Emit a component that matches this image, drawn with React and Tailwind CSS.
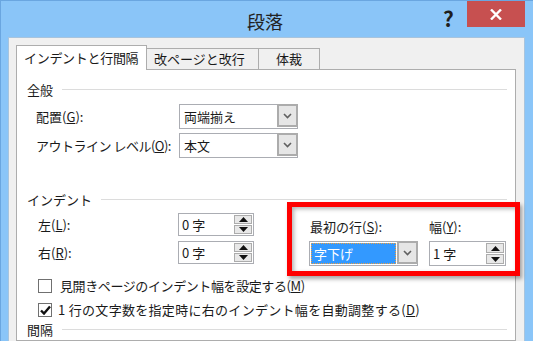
import React from 'react';

const font = { fontFamily: '"Noto Sans CJK JP", "Noto Sans", sans-serif' };

const Chevron = () => (
  <svg width="9" height="6" viewBox="0 0 9 6">
    <polyline points="1,1 4.5,4.5 8,1" fill="none" stroke="#606060" strokeWidth="1.6" />
  </svg>
);

const DropButton = () => (
  <div className="w-[21px] h-full flex items-center justify-center bg-[#e6e6e6] border-2 border-[#acacac] -my-px -mr-px">
    <Chevron />
  </div>
);

const Combo = ({ value, width, focused }) => (
  <div className={`${width} h-[25px] flex bg-white border border-[#abadb3]`}>
    <div className="flex-1 flex items-center pl-[1px] pr-[1px]">
      {focused ? (
        <span className="flex-1 h-[21px] flex items-center bg-[#3399ff] text-white border border-dotted border-[#f0a040] pl-[2px] leading-none">
          {value}
        </span>
      ) : (
        <span className="pl-[3px] leading-none">{value}</span>
      )}
    </div>
    <DropButton />
  </div>
);

const Arrow = ({ up }) => (
  <svg width="9" height="5" viewBox="0 0 9 5">
    <polygon points={up ? '0,5 9,5 4.5,0' : '0,0 9,0 4.5,5'} fill="#111" />
  </svg>
);

const Spin = ({ value, width, height }) => (
  <div className={`${width} ${height} flex bg-white border border-[#abadb3]`}>
    <span className="flex-1 flex items-center pl-[3px] leading-none">{value}</span>
    <div className="w-[19px] flex flex-col py-[1px] pr-[1px] gap-px">
      <div className="flex-1 flex items-center justify-center bg-[#e8e8e8] border border-[#acacac]">
        <Arrow up />
      </div>
      <div className="flex-1 flex items-center justify-center bg-[#e8e8e8] border border-[#acacac]">
        <Arrow />
      </div>
    </div>
  </div>
);

const GroupHeader = ({ label, className }) => (
  <div className={`flex items-center pl-[10px] pr-[8px] h-[19px] ${className}`}>
    <span>{label}</span>
    <div className="flex-1 h-px bg-[#dcdcdc] ml-[9px]" />
  </div>
);

const Checkbox = ({ checked, children, className }) => (
  <div className={`flex items-center h-[17px] pl-[21px] ${className}`}>
    <div className="w-[14px] h-[14px] border border-[#707070] bg-white flex items-center justify-center">
      {checked && (
        <svg width="11" height="10" viewBox="0 0 11 10">
          <path d="M1 5.5 L4 8.5 L10 1.5" fill="none" stroke="#111" strokeWidth="2.4" />
        </svg>
      )}
    </div>
    {children}
  </div>
);

export default function App() {
  return (
    <div
      className="w-[533px] h-[341px] overflow-hidden bg-[#8ac5f8] border-t border-l border-[#6aa6e0] flex flex-col text-[13px] text-[#1a1a1a]"
      style={font}
    >
      {/* Title bar */}
      <div className="relative h-[36px] flex items-center justify-center shrink-0">
        <span className="text-[18px] text-[#222] pt-[4px] -ml-[4px]">段落</span>
        <span className="absolute left-[442px] top-[2px] text-[21px] font-bold text-[#1e1e1e]">?</span>
        <div className="absolute left-[466px] top-0 w-[58px] h-[26px] bg-[#c75050] flex items-center justify-center">
          <svg width="12" height="11" viewBox="0 0 12 11">
            <path d="M1 0.5 L11 10.5 M11 0.5 L1 10.5" stroke="#fff" strokeWidth="2.4" />
          </svg>
        </div>
      </div>

      {/* Client area */}
      <div className="flex-1 ml-[7px] mr-[8px] bg-[#f0f0f0] border-t border-l border-r border-[#a8c4dd] pl-[7px] pt-[8px] flex flex-col">
        {/* Tabs */}
        <div className="flex items-end h-[24px] relative z-10 -mb-px">
          <div className="w-[131px] h-[25px] bg-white border border-b-0 border-[#adadad] flex items-center pl-[7px] tracking-[-0.3px]">
            インデントと行間隔
          </div>
          <div className="w-[112px] h-[22px] bg-[#f0f0f0] border border-l-0 border-[#adadad] flex items-center pl-[7px]">
            改ページと改行
          </div>
          <div className="w-[61px] h-[22px] bg-[#f0f0f0] border border-l-0 border-[#adadad] flex items-center justify-center">
            体裁
          </div>
        </div>

        {/* Panel */}
        <div className="w-[500px] flex-1 bg-white border border-[#adadad] pt-[10px]">
          <GroupHeader label="全般" />

          <div className="flex items-center h-[25px] mt-[5px] pl-[19px]">
            <span className="w-[143px]">
              配置(<span className="underline">G</span>):
            </span>
            <Combo value="両端揃え" width="w-[119px]" />
          </div>
          <div className="flex items-center h-[25px] mt-[4px] pl-[19px]">
            <span className="w-[143px] tracking-[-0.5px] whitespace-nowrap">
              アウトライン レベル(<span className="underline">O</span>):
            </span>
            <Combo value="本文" width="w-[119px]" />
          </div>

          <GroupHeader label="インデント" className="mt-[32px]" />

          <div className="relative mt-[4px]">
            <div className="flex items-center h-[23px] pl-[21px]">
              <span className="w-[140px]">
                左(<span className="underline">L</span>):
              </span>
              <Spin value="0 字" width="w-[76px]" height="h-[23px]" />
              <span className="ml-[56px] w-[119px] pt-[5px]">
                最初の行(<span className="underline">S</span>):
              </span>
              <span className="pt-[5px]">
                幅(<span className="underline">Y</span>):
              </span>
            </div>
            <div className="flex items-start h-[25px] mt-[5px] pl-[21px]">
              <span className="w-[140px] h-[23px] flex items-center">
                右(<span className="underline">R</span>):
              </span>
              <Spin value="0 字" width="w-[76px]" height="h-[23px]" />
              <div className="ml-[55px]">
                <Combo value="字下げ" width="w-[109px]" focused />
              </div>
              <div className="ml-[11px]">
                <Spin value="1 字" width="w-[77px]" height="h-[25px]" />
              </div>
            </div>

            {/* Highlight annotation */}
            <div className="absolute left-[270px] top-[-11px] w-[233px] h-[74px] border-[5px] border-[#ff0000] shadow-[2px_3px_4px_rgba(0,0,0,0.35),inset_2px_2px_4px_rgba(0,0,0,0.3)] pointer-events-none" />
          </div>

          <Checkbox className="mt-[11px]">
            <span className="ml-[8px] whitespace-nowrap tracking-[-0.4px]">
              見開きページのインデント幅を設定する(<span className="underline">M</span>)
            </span>
          </Checkbox>
          <Checkbox checked className="mt-[7px]">
            <span className="ml-[6px] whitespace-nowrap tracking-[0.3px]">
              1 行の文字数を指定時に右のインデント幅を自動調整する(<span className="underline">D</span>)
            </span>
          </Checkbox>

          <GroupHeader label="間隔" className="mt-[2px]" />
        </div>
      </div>
    </div>
  );
}
